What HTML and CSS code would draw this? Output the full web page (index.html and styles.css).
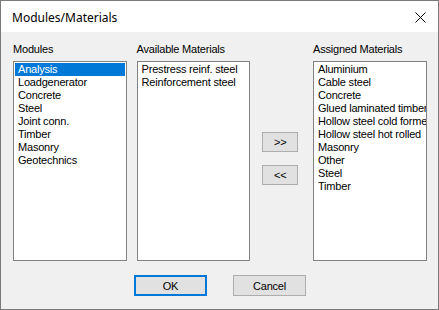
FILE: index.html
```html
<!DOCTYPE html>
<html lang="en">
<head>
    <meta charset="UTF-8">
    <title>Modules/Materials</title>
    <link rel="stylesheet" href="styles.css">
</head>
<body>
    <div class="dialog">
        <div class="titlebar">
            <span class="title">Modules/Materials</span>
            <span class="close">
                <svg width="11" height="11" viewBox="0 0 11 11"><path d="M0.5 0.5 L10.5 10.5 M10.5 0.5 L0.5 10.5" stroke="#000" stroke-width="1" fill="none"/></svg>
            </span>
        </div>
        <div class="client">
            <div class="columns">
                <div class="column">
                    <div class="label">Modules</div>
                    <ul class="listbox">
                        <li class="selected">Analysis</li>
                        <li>Loadgenerator</li>
                        <li>Concrete</li>
                        <li>Steel</li>
                        <li>Joint conn.</li>
                        <li>Timber</li>
                        <li>Masonry</li>
                        <li>Geotechnics</li>
                    </ul>
                </div>
                <div class="column">
                    <div class="label">Available Materials</div>
                    <ul class="listbox">
                        <li>Prestress reinf. steel</li>
                        <li>Reinforcement steel</li>
                    </ul>
                </div>
                <div class="move-buttons">
                    <button class="btn btn-small">&gt;&gt;</button>
                    <button class="btn btn-small">&lt;&lt;</button>
                </div>
                <div class="column">
                    <div class="label">Assigned Materials</div>
                    <ul class="listbox">
                        <li>Aluminium</li>
                        <li>Cable steel</li>
                        <li>Concrete</li>
                        <li>Glued laminated timber</li>
                        <li>Hollow steel cold formed</li>
                        <li>Hollow steel hot rolled</li>
                        <li>Masonry</li>
                        <li>Other</li>
                        <li>Steel</li>
                        <li>Timber</li>
                    </ul>
                </div>
            </div>
            <div class="footer">
                <button class="btn btn-wide btn-default">OK</button>
                <button class="btn btn-wide">Cancel</button>
            </div>
        </div>
    </div>
</body>
</html>
```

FILE: styles.css
```css
body {
    margin: 0;
    padding: 0;
    background-color: #ffffff;
    font-family: "Liberation Sans", Arial, sans-serif;
}
.dialog {
    width: 439px;
    height: 310px;
    box-sizing: border-box;
    border: 1px solid #7a7a7a;
    background-color: #f0f0f0;
    display: flex;
    flex-direction: column;
}
.titlebar {
    height: 31px;
    background-color: #ffffff;
    display: flex;
    align-items: center;
    justify-content: space-between;
    padding: 0 11px 0 11px;
}
.title {
    font-family: "Noto Sans", "Liberation Sans", sans-serif;
    font-size: 12px;
    color: #000;
    padding-top: 1px;
}
.close {
    display: flex;
    margin-right: 1px;
    margin-top: 1px;
}
.client {
    padding: 11px 11px 0 12px;
    font-size: 11px;
    letter-spacing: -0.2px;
    color: #000;
}
.columns {
    display: flex;
}
.column {
    width: 114px;
    margin-right: 10px;
}
.column:last-child {
    margin-right: 0;
}
.label {
    height: 13px;
    line-height: 13px;
    margin-bottom: 5px;
}
.listbox {
    list-style: none;
    margin: 0;
    padding: 1px;
    height: 200px;
    box-sizing: border-box;
    border: 1px solid #828282;
    background-color: #ffffff;
    overflow: hidden;
}
.listbox li {
    height: 13px;
    line-height: 13px;
    padding-left: 3px;
    white-space: nowrap;
}
.listbox li.selected {
    background-color: #0078d7;
    color: #ffffff;
}
.move-buttons {
    width: 63px;
    margin-left: -10px;
    padding-top: 89px;
    display: flex;
    flex-direction: column;
    align-items: flex-start;
    padding-left: 12px;
    box-sizing: border-box;
    gap: 13px;
}
.btn {
    font-family: "Liberation Sans", Arial, sans-serif;
    font-size: 11px;
    letter-spacing: -0.2px;
    color: #000;
    background-color: #e1e1e1;
    border: 1px solid #adadad;
    padding: 0;
    margin: 0;
    box-sizing: border-box;
}
.btn-small {
    width: 36px;
    height: 20px;
}
.btn-wide {
    width: 73px;
    height: 21px;
}
.btn-default {
    border-color: #0078d7;
    box-shadow: inset 0 0 0 1px #0078d7;
}
.footer {
    display: flex;
    margin-top: 14px;
    padding-left: 121px;
    gap: 26px;
}
```
